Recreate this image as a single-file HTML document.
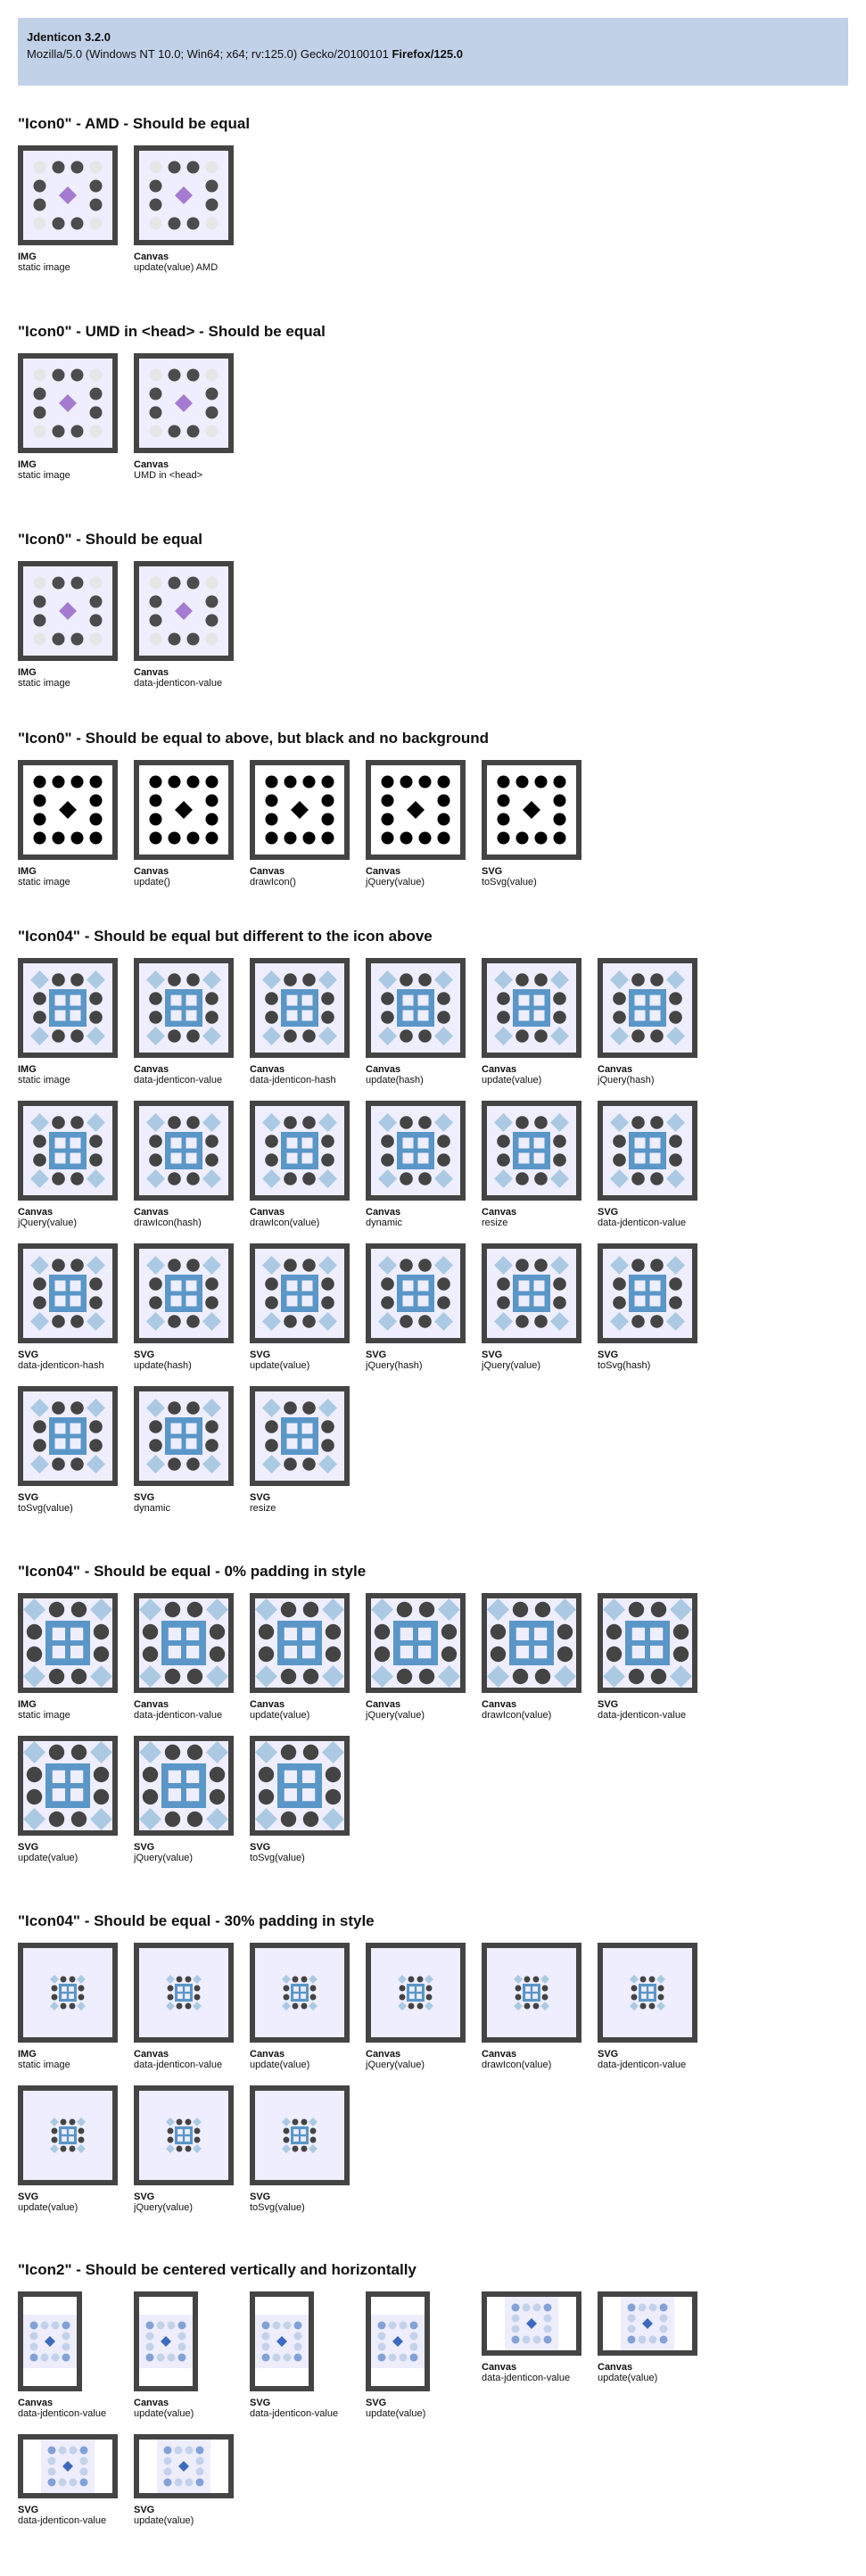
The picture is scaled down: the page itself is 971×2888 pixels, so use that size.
<!DOCTYPE html>
<html><head><meta charset="utf-8"><style>
*{margin:0;padding:0;box-sizing:border-box}
html,body{width:971px;height:2888px;background:#fff;font-family:"Liberation Sans",Arial,sans-serif;color:#111;position:relative;overflow:hidden}
.hdr{position:absolute;left:20px;top:20px;width:931px;height:76px;background:#c1d1e8;padding:12px 10px;font-size:13px;line-height:19px}
.hdr b{font-weight:bold}
.sec{position:absolute;left:20px;width:800px}
.sec h2{font-size:17px;font-weight:bold;line-height:20px;height:20px;position:absolute;top:-34px;left:0;white-space:nowrap}
.items{display:flex;flex-wrap:wrap;width:800px}
.it{width:112px;margin-right:18px;height:160px}
.box{border:6px solid #444;background:#eeeeff;width:112px;height:112px;position:relative;overflow:hidden}
.box svg{position:absolute;display:block}
.wb{background:#fff}
.lb{margin-top:7px;font-size:11px;line-height:12px;white-space:nowrap;color:#111}
.lb b{display:block;font-weight:bold}
</style></head><body>
<svg width="0" height="0" style="position:absolute">
<defs>
<symbol id="i0" viewBox="0 0 84 84">
<g fill="#e6e6e6"><circle cx="10.5" cy="10.5" r="7"/><circle cx="73.5" cy="10.5" r="7"/><circle cx="10.5" cy="73.5" r="7"/><circle cx="73.5" cy="73.5" r="7"/></g>
<g fill="#4c4c4c"><circle cx="31.5" cy="10.5" r="7"/><circle cx="52.5" cy="10.5" r="7"/><circle cx="31.5" cy="73.5" r="7"/><circle cx="52.5" cy="73.5" r="7"/><circle cx="10.5" cy="31.5" r="7"/><circle cx="10.5" cy="52.5" r="7"/><circle cx="73.5" cy="31.5" r="7"/><circle cx="73.5" cy="52.5" r="7"/></g>
<path d="M42 32L52 42L42 52L32 42Z" fill="#a47bd0"/>
</symbol>
<symbol id="ib" viewBox="0 0 84 84">
<g fill="#000"><circle cx="10.5" cy="10.5" r="7"/><circle cx="73.5" cy="10.5" r="7"/><circle cx="10.5" cy="73.5" r="7"/><circle cx="73.5" cy="73.5" r="7"/>
<circle cx="31.5" cy="10.5" r="7"/><circle cx="52.5" cy="10.5" r="7"/><circle cx="31.5" cy="73.5" r="7"/><circle cx="52.5" cy="73.5" r="7"/><circle cx="10.5" cy="31.5" r="7"/><circle cx="10.5" cy="52.5" r="7"/><circle cx="73.5" cy="31.5" r="7"/><circle cx="73.5" cy="52.5" r="7"/>
<path d="M42 32L52 42L42 52L32 42Z"/></g>
</symbol>
<symbol id="i4" viewBox="0 0 84 84">
<g fill="#abc9e2"><path d="M10.5 0L21 10.5L10.5 21L0 10.5Z"/><path d="M73.5 0L84 10.5L73.5 21L63 10.5Z"/><path d="M10.5 63L21 73.5L10.5 84L0 73.5Z"/><path d="M73.5 63L84 73.5L73.5 84L63 73.5Z"/></g>
<g fill="#444"><circle cx="31.5" cy="10.5" r="7.3"/><circle cx="52.5" cy="10.5" r="7.3"/><circle cx="31.5" cy="73.5" r="7.3"/><circle cx="52.5" cy="73.5" r="7.3"/><circle cx="10.5" cy="31.5" r="7.3"/><circle cx="10.5" cy="52.5" r="7.3"/><circle cx="73.5" cy="31.5" r="7.3"/><circle cx="73.5" cy="52.5" r="7.3"/></g>
<rect x="21" y="21" width="42" height="42" fill="#5a96c7"/>
<g fill="#eeeeff"><rect x="27.5" y="27.5" width="12" height="12"/><rect x="44.5" y="27.5" width="12" height="12"/><rect x="27.5" y="44.5" width="12" height="12"/><rect x="44.5" y="44.5" width="12" height="12"/></g>
</symbol>
<symbol id="i2" viewBox="0 0 60 60">
<rect width="60" height="60" fill="#ededfc"/>
<g fill="#83a1d7"><circle cx="12" cy="12" r="4.5"/><circle cx="48" cy="12" r="4.5"/><circle cx="12" cy="48" r="4.5"/><circle cx="48" cy="48" r="4.5"/></g>
<g fill="#c3d2ea"><circle cx="24" cy="12" r="4.5"/><circle cx="36" cy="12" r="4.5"/><circle cx="24" cy="48" r="4.5"/><circle cx="36" cy="48" r="4.5"/><circle cx="12" cy="24" r="4.5"/><circle cx="12" cy="36" r="4.5"/><circle cx="48" cy="24" r="4.5"/><circle cx="48" cy="36" r="4.5"/></g>
<path d="M30 24L36 30L30 36L24 30Z" fill="#3b6abf"/>
</symbol>
</defs></svg>

<div class="hdr"><b>Jdenticon 3.2.0</b><br>Mozilla/5.0 (Windows NT 10.0; Win64; x64; rv:125.0) Gecko/20100101 <b>Firefox/125.0</b></div>

<div class="sec" style="top:163px"><h2>"Icon0" - AMD - Should be equal</h2><div class="items">
<div class="it"><div class="box"><svg style="left:8px;top:8px" width="84" height="84"><use href="#i0"/></svg></div><div class="lb"><b>IMG</b>static image</div></div>
<div class="it"><div class="box"><svg style="left:8px;top:8px" width="84" height="84"><use href="#i0"/></svg></div><div class="lb"><b>Canvas</b>update(value) AMD</div></div>
</div></div>

<div class="sec" style="top:396px"><h2>"Icon0" - UMD in &lt;head&gt; - Should be equal</h2><div class="items">
<div class="it"><div class="box"><svg style="left:8px;top:8px" width="84" height="84"><use href="#i0"/></svg></div><div class="lb"><b>IMG</b>static image</div></div>
<div class="it"><div class="box"><svg style="left:8px;top:8px" width="84" height="84"><use href="#i0"/></svg></div><div class="lb"><b>Canvas</b>UMD in &lt;head&gt;</div></div>
</div></div>

<div class="sec" style="top:629px"><h2>"Icon0" - Should be equal</h2><div class="items">
<div class="it"><div class="box"><svg style="left:8px;top:8px" width="84" height="84"><use href="#i0"/></svg></div><div class="lb"><b>IMG</b>static image</div></div>
<div class="it"><div class="box"><svg style="left:8px;top:8px" width="84" height="84"><use href="#i0"/></svg></div><div class="lb"><b>Canvas</b>data-jdenticon-value</div></div>
</div></div>

<div class="sec" style="top:852px"><h2>"Icon0" - Should be equal to above, but black and no background</h2><div class="items">
<div class="it"><div class="box wb"><svg style="left:8px;top:8px" width="84" height="84"><use href="#ib"/></svg></div><div class="lb"><b>IMG</b>static image</div></div>
<div class="it"><div class="box wb"><svg style="left:8px;top:8px" width="84" height="84"><use href="#ib"/></svg></div><div class="lb"><b>Canvas</b>update()</div></div>
<div class="it"><div class="box wb"><svg style="left:8px;top:8px" width="84" height="84"><use href="#ib"/></svg></div><div class="lb"><b>Canvas</b>drawIcon()</div></div>
<div class="it"><div class="box wb"><svg style="left:8px;top:8px" width="84" height="84"><use href="#ib"/></svg></div><div class="lb"><b>Canvas</b>jQuery(value)</div></div>
<div class="it"><div class="box wb"><svg style="left:8px;top:8px" width="84" height="84"><use href="#ib"/></svg></div><div class="lb"><b>SVG</b>toSvg(value)</div></div>
</div></div>

<div class="sec" style="top:1074px"><h2>"Icon04" - Should be equal but different to the icon above</h2><div class="items">
<div class="it"><div class="box"><svg style="left:8px;top:8px" width="84" height="84"><use href="#i4"/></svg></div><div class="lb"><b>IMG</b>static image</div></div>
<div class="it"><div class="box"><svg style="left:8px;top:8px" width="84" height="84"><use href="#i4"/></svg></div><div class="lb"><b>Canvas</b>data-jdenticon-value</div></div>
<div class="it"><div class="box"><svg style="left:8px;top:8px" width="84" height="84"><use href="#i4"/></svg></div><div class="lb"><b>Canvas</b>data-jdenticon-hash</div></div>
<div class="it"><div class="box"><svg style="left:8px;top:8px" width="84" height="84"><use href="#i4"/></svg></div><div class="lb"><b>Canvas</b>update(hash)</div></div>
<div class="it"><div class="box"><svg style="left:8px;top:8px" width="84" height="84"><use href="#i4"/></svg></div><div class="lb"><b>Canvas</b>update(value)</div></div>
<div class="it"><div class="box"><svg style="left:8px;top:8px" width="84" height="84"><use href="#i4"/></svg></div><div class="lb"><b>Canvas</b>jQuery(hash)</div></div>
<div class="it"><div class="box"><svg style="left:8px;top:8px" width="84" height="84"><use href="#i4"/></svg></div><div class="lb"><b>Canvas</b>jQuery(value)</div></div>
<div class="it"><div class="box"><svg style="left:8px;top:8px" width="84" height="84"><use href="#i4"/></svg></div><div class="lb"><b>Canvas</b>drawIcon(hash)</div></div>
<div class="it"><div class="box"><svg style="left:8px;top:8px" width="84" height="84"><use href="#i4"/></svg></div><div class="lb"><b>Canvas</b>drawIcon(value)</div></div>
<div class="it"><div class="box"><svg style="left:8px;top:8px" width="84" height="84"><use href="#i4"/></svg></div><div class="lb"><b>Canvas</b>dynamic</div></div>
<div class="it"><div class="box"><svg style="left:8px;top:8px" width="84" height="84"><use href="#i4"/></svg></div><div class="lb"><b>Canvas</b>resize</div></div>
<div class="it"><div class="box"><svg style="left:8px;top:8px" width="84" height="84"><use href="#i4"/></svg></div><div class="lb"><b>SVG</b>data-jdenticon-value</div></div>
<div class="it"><div class="box"><svg style="left:8px;top:8px" width="84" height="84"><use href="#i4"/></svg></div><div class="lb"><b>SVG</b>data-jdenticon-hash</div></div>
<div class="it"><div class="box"><svg style="left:8px;top:8px" width="84" height="84"><use href="#i4"/></svg></div><div class="lb"><b>SVG</b>update(hash)</div></div>
<div class="it"><div class="box"><svg style="left:8px;top:8px" width="84" height="84"><use href="#i4"/></svg></div><div class="lb"><b>SVG</b>update(value)</div></div>
<div class="it"><div class="box"><svg style="left:8px;top:8px" width="84" height="84"><use href="#i4"/></svg></div><div class="lb"><b>SVG</b>jQuery(hash)</div></div>
<div class="it"><div class="box"><svg style="left:8px;top:8px" width="84" height="84"><use href="#i4"/></svg></div><div class="lb"><b>SVG</b>jQuery(value)</div></div>
<div class="it"><div class="box"><svg style="left:8px;top:8px" width="84" height="84"><use href="#i4"/></svg></div><div class="lb"><b>SVG</b>toSvg(hash)</div></div>
<div class="it"><div class="box"><svg style="left:8px;top:8px" width="84" height="84"><use href="#i4"/></svg></div><div class="lb"><b>SVG</b>toSvg(value)</div></div>
<div class="it"><div class="box"><svg style="left:8px;top:8px" width="84" height="84"><use href="#i4"/></svg></div><div class="lb"><b>SVG</b>dynamic</div></div>
<div class="it"><div class="box"><svg style="left:8px;top:8px" width="84" height="84"><use href="#i4"/></svg></div><div class="lb"><b>SVG</b>resize</div></div>
</div></div>

<div class="sec" style="top:1786px"><h2>"Icon04" - Should be equal - 0% padding in style</h2><div class="items">
<div class="it"><div class="box"><svg style="left:0;top:0" width="100" height="100"><use href="#i4"/></svg></div><div class="lb"><b>IMG</b>static image</div></div>
<div class="it"><div class="box"><svg style="left:0;top:0" width="100" height="100"><use href="#i4"/></svg></div><div class="lb"><b>Canvas</b>data-jdenticon-value</div></div>
<div class="it"><div class="box"><svg style="left:0;top:0" width="100" height="100"><use href="#i4"/></svg></div><div class="lb"><b>Canvas</b>update(value)</div></div>
<div class="it"><div class="box"><svg style="left:0;top:0" width="100" height="100"><use href="#i4"/></svg></div><div class="lb"><b>Canvas</b>jQuery(value)</div></div>
<div class="it"><div class="box"><svg style="left:0;top:0" width="100" height="100"><use href="#i4"/></svg></div><div class="lb"><b>Canvas</b>drawIcon(value)</div></div>
<div class="it"><div class="box"><svg style="left:0;top:0" width="100" height="100"><use href="#i4"/></svg></div><div class="lb"><b>SVG</b>data-jdenticon-value</div></div>
<div class="it"><div class="box"><svg style="left:0;top:0" width="100" height="100"><use href="#i4"/></svg></div><div class="lb"><b>SVG</b>update(value)</div></div>
<div class="it"><div class="box"><svg style="left:0;top:0" width="100" height="100"><use href="#i4"/></svg></div><div class="lb"><b>SVG</b>jQuery(value)</div></div>
<div class="it"><div class="box"><svg style="left:0;top:0" width="100" height="100"><use href="#i4"/></svg></div><div class="lb"><b>SVG</b>toSvg(value)</div></div>
</div></div>

<div class="sec" style="top:2178px"><h2>"Icon04" - Should be equal - 30% padding in style</h2><div class="items">
<div class="it"><div class="box"><svg style="left:30px;top:30px" width="40" height="40"><use href="#i4"/></svg></div><div class="lb"><b>IMG</b>static image</div></div>
<div class="it"><div class="box"><svg style="left:30px;top:30px" width="40" height="40"><use href="#i4"/></svg></div><div class="lb"><b>Canvas</b>data-jdenticon-value</div></div>
<div class="it"><div class="box"><svg style="left:30px;top:30px" width="40" height="40"><use href="#i4"/></svg></div><div class="lb"><b>Canvas</b>update(value)</div></div>
<div class="it"><div class="box"><svg style="left:30px;top:30px" width="40" height="40"><use href="#i4"/></svg></div><div class="lb"><b>Canvas</b>jQuery(value)</div></div>
<div class="it"><div class="box"><svg style="left:30px;top:30px" width="40" height="40"><use href="#i4"/></svg></div><div class="lb"><b>Canvas</b>drawIcon(value)</div></div>
<div class="it"><div class="box"><svg style="left:30px;top:30px" width="40" height="40"><use href="#i4"/></svg></div><div class="lb"><b>SVG</b>data-jdenticon-value</div></div>
<div class="it"><div class="box"><svg style="left:30px;top:30px" width="40" height="40"><use href="#i4"/></svg></div><div class="lb"><b>SVG</b>update(value)</div></div>
<div class="it"><div class="box"><svg style="left:30px;top:30px" width="40" height="40"><use href="#i4"/></svg></div><div class="lb"><b>SVG</b>jQuery(value)</div></div>
<div class="it"><div class="box"><svg style="left:30px;top:30px" width="40" height="40"><use href="#i4"/></svg></div><div class="lb"><b>SVG</b>toSvg(value)</div></div>
</div></div>

<div class="sec" style="top:2569px"><h2>"Icon2" - Should be centered vertically and horizontally</h2><div class="items">
<div class="it"><div class="box wb" style="width:72px"><svg style="left:0;top:20px" width="60" height="60"><use href="#i2"/></svg></div><div class="lb"><b>Canvas</b>data-jdenticon-value</div></div>
<div class="it"><div class="box wb" style="width:72px"><svg style="left:0;top:20px" width="60" height="60"><use href="#i2"/></svg></div><div class="lb"><b>Canvas</b>update(value)</div></div>
<div class="it"><div class="box wb" style="width:72px"><svg style="left:0;top:20px" width="60" height="60"><use href="#i2"/></svg></div><div class="lb"><b>SVG</b>data-jdenticon-value</div></div>
<div class="it"><div class="box wb" style="width:72px"><svg style="left:0;top:20px" width="60" height="60"><use href="#i2"/></svg></div><div class="lb"><b>SVG</b>update(value)</div></div>
<div class="it"><div class="box wb" style="height:72px"><svg style="left:20px;top:0" width="60" height="60"><use href="#i2"/></svg></div><div class="lb"><b>Canvas</b>data-jdenticon-value</div></div>
<div class="it"><div class="box wb" style="height:72px"><svg style="left:20px;top:0" width="60" height="60"><use href="#i2"/></svg></div><div class="lb"><b>Canvas</b>update(value)</div></div>
<div class="it"><div class="box wb" style="height:72px"><svg style="left:20px;top:0" width="60" height="60"><use href="#i2"/></svg></div><div class="lb"><b>SVG</b>data-jdenticon-value</div></div>
<div class="it"><div class="box wb" style="height:72px"><svg style="left:20px;top:0" width="60" height="60"><use href="#i2"/></svg></div><div class="lb"><b>SVG</b>update(value)</div></div>
</div></div>

</body></html>
